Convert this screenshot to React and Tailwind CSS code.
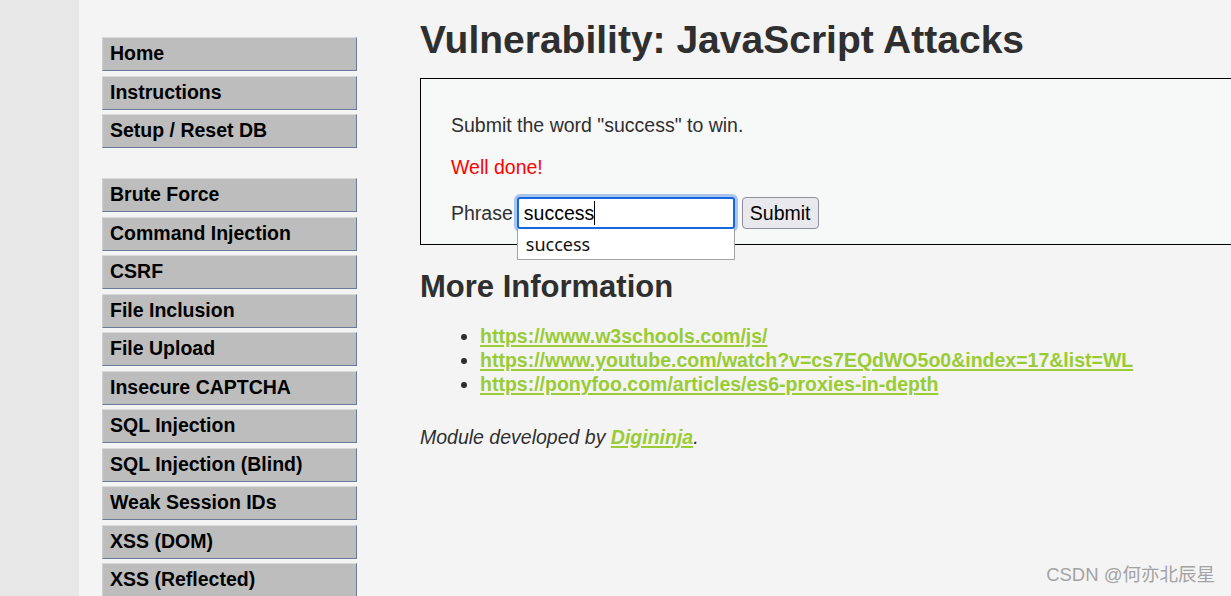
import React from "react";

const group1 = ["Home", "Instructions", "Setup / Reset DB"];
const group2 = [
  "Brute Force",
  "Command Injection",
  "CSRF",
  "File Inclusion",
  "File Upload",
  "Insecure CAPTCHA",
  "SQL Injection",
  "SQL Injection (Blind)",
  "Weak Session IDs",
  "XSS (DOM)",
  "XSS (Reflected)",
];

function MenuItem({ label }) {
  return (
    <div className="h-[34px] shrink-0 flex items-center pl-[7px] bg-[#bdbdbd] border-t border-l border-t-[#dadada] border-l-[#cfcfcf] border-b border-r border-b-[#6c7a99] border-r-[#6c7a99] text-[19.5px] font-bold text-black leading-none">
      {label}
    </div>
  );
}

export default function App() {
  const sans = { fontFamily: '"Liberation Sans", Arial, sans-serif' };
  return (
    <div
      className="relative flex h-[596px] w-full overflow-hidden bg-[#f4f4f4] text-[#2f2f2f]"
      style={sans}
    >
      <div className="w-[79px] shrink-0 bg-[#e7e7e7]" />
      <div className="flex flex-1 min-w-0">
        <nav className="ml-[23px] w-[255px] shrink-0 pt-[37px] flex flex-col">
          <div className="flex flex-col gap-[4.5px]">
            {group1.map((l) => (
              <MenuItem key={l} label={l} />
            ))}
          </div>
          <div className="mt-[30px] flex flex-col gap-[4.5px]">
            {group2.map((l) => (
              <MenuItem key={l} label={l} />
            ))}
          </div>
        </nav>
        <main className="ml-[63px] flex-1 min-w-0 pt-[18px]">
          <h1 className="text-[39px] font-bold leading-[44.85px] text-[#2f2f2f] whitespace-nowrap">
            Vulnerability: JavaScript Attacks
          </h1>
          <div className="mt-[15px] w-[1000px] h-[167px] border border-black bg-[#f7f8f8] pl-[30px] pt-[35px] text-[19.5px] leading-[22.4px]">
            <p>Submit the word "success" to win.</p>
            <p className="mt-[19.5px] text-[#ff0000]">Well done!</p>
            <div className="mt-[18.6px] flex items-baseline">
              <span>Phrase</span>
              <div className="relative ml-[4px] w-[218px] h-[32px] rounded-[3px] border-2 border-[#1667e0] bg-white shadow-[0_0_0_3px_#a9c5ee] flex items-center pl-[5px] text-black leading-[22.4px]">
                <span>success</span>
                <span className="inline-block w-px h-[24px] bg-black" />
                <div className="absolute left-[-2px] top-[30px] w-[218px] h-[31px] bg-white border border-[#a3a3a3] border-t-0 flex items-center pl-[8px] text-[18px] text-[#111]" style={{ fontFamily: '"Noto Sans", sans-serif' }}>
                  success
                </div>
              </div>
              <button className="ml-[7px] h-[32px] px-[7px] rounded-[4px] border border-[#8f8f9d] bg-[#e9e9ed] text-black text-[19.5px] leading-[22.4px]">
                Submit
              </button>
            </div>
          </div>
          <h2 className="mt-[24.4px] text-[31px] font-bold leading-[35.65px] text-[#2f2f2f]">
            More Information
          </h2>
          <ul className="mt-[19.2px] list-disc pl-[60px] text-[19.5px] leading-[24px]">
            {[
              "https://www.w3schools.com/js/",
              "https://www.youtube.com/watch?v=cs7EQdWO5o0&index=17&list=WL",
              "https://ponyfoo.com/articles/es6-proxies-in-depth",
            ].map((u) => (
              <li key={u}>
                <a href="#" className="font-bold text-[#99cc33] underline underline-offset-[2px] decoration-[2px]">
                  {u}
                </a>
              </li>
            ))}
          </ul>
          <p className="mt-[30px] text-[19.5px] leading-[22.4px] italic">
            Module developed by{" "}
            <a href="#" className="font-bold text-[#99cc33] underline underline-offset-[2px] decoration-[2px]">
              Digininja
            </a>
            .
          </p>
        </main>
      </div>
      <div
        className="absolute right-[16px] bottom-[7px] text-[18.5px] text-[#a3a3a3]"
        style={{ fontFamily: '"Liberation Sans", "Noto Sans CJK SC", sans-serif' }}
      >
        CSDN @何亦北辰星
      </div>
    </div>
  );
}
